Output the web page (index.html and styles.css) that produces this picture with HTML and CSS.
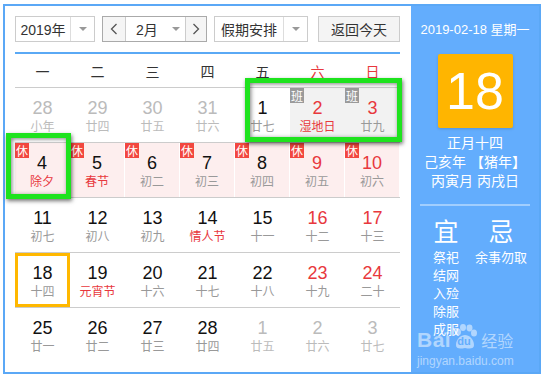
FILE: index.html
```html
<!DOCTYPE html>
<html lang="zh">
<head>
<meta charset="utf-8">
<link rel="stylesheet" href="styles.css">
</head>
<body>
<div class="app">
  <div class="main">
    <div class="toolbar">
      <div class="sel sel-year"><span class="sel-text">2019年</span><span class="sel-arrow"><i class="tri"></i></span></div>
      <div class="month-group">
        <span class="nav"><svg width="8" height="12" viewBox="0 0 8 12"><path d="M6.5 1 L1.5 6 L6.5 11" fill="none" stroke="#555" stroke-width="1.3"/></svg></span>
        <span class="month"><span class="month-text">2月</span><i class="tri"></i></span>
        <span class="nav nav-next"><svg width="8" height="12" viewBox="0 0 8 12"><path d="M1.5 1 L6.5 6 L1.5 11" fill="none" stroke="#555" stroke-width="1.3"/></svg></span>
      </div>
      <div class="sel sel-hol"><span class="sel-text">假期安排</span><span class="sel-arrow"><i class="tri"></i></span></div>
      <div class="btn-today">返回今天</div>
    </div>
    <div class="weekdays">
      <span>一</span><span>二</span><span>三</span><span>四</span><span>五</span><span class="red">六</span><span class="red">日</span>
    </div>
    <div class="grid">
      <div class="row">
        <div class="cell other"><b>28</b><em>小年</em></div>
        <div class="cell other"><b>29</b><em>廿四</em></div>
        <div class="cell other"><b>30</b><em>廿五</em></div>
        <div class="cell other"><b>31</b><em>廿六</em></div>
        <div class="cell"><b>1</b><em>廿七</em></div>
        <div class="cell work"><span class="badge ban">班</span><b class="red">2</b><em class="red">湿地日</em></div>
        <div class="cell work"><span class="badge ban">班</span><b class="red">3</b><em>廿九</em></div>
      </div>
      <div class="row rest-row">
        <div class="cell rest"><span class="badge xiu">休</span><b>4</b><em class="red">除夕</em></div>
        <div class="cell rest"><span class="badge xiu">休</span><b>5</b><em class="red">春节</em></div>
        <div class="cell rest"><span class="badge xiu">休</span><b>6</b><em>初二</em></div>
        <div class="cell rest"><span class="badge xiu">休</span><b>7</b><em>初三</em></div>
        <div class="cell rest"><span class="badge xiu">休</span><b>8</b><em>初四</em></div>
        <div class="cell rest"><span class="badge xiu">休</span><b class="red">9</b><em>初五</em></div>
        <div class="cell rest"><span class="badge xiu">休</span><b class="red">10</b><em>初六</em></div>
      </div>
      <div class="row">
        <div class="cell"><b>11</b><em>初七</em></div>
        <div class="cell"><b>12</b><em>初八</em></div>
        <div class="cell"><b>13</b><em>初九</em></div>
        <div class="cell"><b>14</b><em class="red">情人节</em></div>
        <div class="cell"><b>15</b><em>十一</em></div>
        <div class="cell"><b class="red">16</b><em>十二</em></div>
        <div class="cell"><b class="red">17</b><em>十三</em></div>
      </div>
      <div class="row">
        <div class="cell today"><b>18</b><em>十四</em></div>
        <div class="cell"><b>19</b><em class="red">元宵节</em></div>
        <div class="cell"><b>20</b><em>十六</em></div>
        <div class="cell"><b>21</b><em>十七</em></div>
        <div class="cell"><b>22</b><em>十八</em></div>
        <div class="cell"><b class="red">23</b><em>十九</em></div>
        <div class="cell"><b class="red">24</b><em>二十</em></div>
      </div>
      <div class="row last">
        <div class="cell"><b>25</b><em>廿一</em></div>
        <div class="cell"><b>26</b><em>廿二</em></div>
        <div class="cell"><b>27</b><em>廿三</em></div>
        <div class="cell"><b>28</b><em>廿四</em></div>
        <div class="cell other"><b>1</b><em>廿五</em></div>
        <div class="cell other"><b>2</b><em>廿六</em></div>
        <div class="cell other"><b>3</b><em>廿七</em></div>
      </div>
    </div>
  </div>
  <div class="side">
    <div class="side-date">2019-02-18 星期一</div>
    <div class="big-day">18</div>
    <div class="lunar">
      <div>正月十四</div>
      <div>己亥年 【猪年】</div>
      <div>丙寅月 丙戌日</div>
    </div>
    <div class="divider"></div>
    <div class="yiji">
      <div class="col">
        <div class="yj-title">宜</div>
        <div class="yj-item">祭祀</div>
        <div class="yj-item">结网</div>
        <div class="yj-item">入殓</div>
        <div class="yj-item">除服</div>
        <div class="yj-item">成服</div>
      </div>
      <div class="col">
        <div class="yj-title">忌</div>
        <div class="yj-item">余事勿取</div>
      </div>
    </div>
    <div class="watermark">
      <div class="wm-logo">
        <span class="wm-bai">Bai</span>
        <span class="wm-paw">
          <svg width="26" height="26" viewBox="0 0 26 26">
            <ellipse cx="6" cy="8" rx="3" ry="3.6" fill="rgba(255,255,255,0.5)"/>
            <ellipse cx="11" cy="3.5" rx="3" ry="3.4" fill="rgba(255,255,255,0.5)"/>
            <ellipse cx="17.5" cy="4" rx="3" ry="3.4" fill="rgba(255,255,255,0.5)"/>
            <ellipse cx="22" cy="9" rx="3" ry="3.6" fill="rgba(255,255,255,0.5)"/>
            <path d="M4 21 C4 15 9 11 13 11 C17 11 22 15 22 21 C22 25 18 25 13 24 C8 25 4 25 4 21 Z" fill="rgba(255,255,255,0.5)"/>
          </svg>
          <span class="wm-du">du</span>
        </span>
        <span class="wm-jy">经验</span>
      </div>
      <div class="wm-url">jingyan.baidu.com</div>
    </div>
  </div>
  <div class="mark mark-a"></div>
  <div class="mark mark-b"></div>
</div>
</body>
</html>
```

FILE: styles.css
```css
* { box-sizing: border-box; }
body {
  margin: 0;
  background: #fff;
  font-family: "Liberation Sans", "Noto Sans CJK SC", sans-serif;
  color: #222;
}
.app {
  position: relative;
  margin: 4px 0 0 3px;
  width: 538px;
  height: 370px;
  border: 2px solid #5ba8f6;
  display: flex;
  background: #fff;
}
.main {
  width: 406px;
  padding: 10px 11px 0 10px;
}
.toolbar {
  display: flex;
  height: 26px;
  padding-bottom: 10px;
  border-bottom: 2px solid #5aa9f5;
  box-sizing: content-box;
}
.sel, .month-group, .btn-today {
  height: 26px;
  border: 1px solid #ccc;
  background: #fff;
  display: flex;
  font-size: 14px;
  color: #333;
}
.sel-year { width: 80px; }
.sel-year .sel-text { width: 55px; }
.sel-hol { width: 94px; margin-left: 7px; }
.sel-hol .sel-text { width: 69px; }
.sel-text {
  display: flex;
  align-items: center;
  justify-content: center;
  border-right: 1px solid #ddd;
}
.sel-arrow {
  flex: 1;
  display: flex;
  align-items: center;
  justify-content: center;
}
.tri {
  width: 0;
  height: 0;
  border-left: 4px solid transparent;
  border-right: 4px solid transparent;
  border-top: 4px solid #999;
}
.month-group {
  width: 105px;
  margin-left: 7px;
  border-color: #aaa;
}
.nav {
  width: 23px;
  background: #f5f5f5;
  display: flex;
  align-items: center;
  justify-content: center;
  border-right: 1px solid #ccc;
}
.nav-next { width: 21px; border-right: none; border-left: 1px solid #ccc; }
.month {
  flex: 1;
  display: flex;
  align-items: center;
  padding-left: 10px;
}
.month-text { width: 36px; }
.btn-today {
  width: 82px;
  margin-left: 10px;
  background: #f4f4f4;
  align-items: center;
  justify-content: center;
}
.weekdays {
  display: grid;
  grid-template-columns: repeat(7, 55px);
  height: 34px;
  align-items: center;
  border-bottom: 1px solid #ccc;
  font-size: 14px;
  color: #333;
}
.weekdays span { text-align: center; }
.red { color: #e8383d !important; }
.row {
  display: grid;
  grid-template-columns: repeat(7, 55px);
  height: 55px;
  border-bottom: 1px solid #ccc;
}
.row.last { border-bottom: none; }
.cell {
  position: relative;
  padding-top: 10px;
  text-align: center;
  display: flex;
  flex-direction: column;
  align-items: center;
}
.cell b {
  font-weight: normal;
  font-size: 18px;
  line-height: 20px;
  color: #111;
}
.cell em {
  font-style: normal;
  font-size: 12px;
  line-height: 16px;
  color: #999;
  font-family: "Noto Sans CJK SC", sans-serif;
}
.cell.other b, .cell.other em { color: #bbb; }
.cell.work { background: #f2f2f2; }
.cell.rest { background: #fdeeee; border-right: 1px solid #fff; }
.cell.today { box-shadow: inset 0 0 0 3px #ffb800; }
.badge {
  position: absolute;
  left: 0;
  top: 0;
  width: 14px;
  height: 15px;
  font-size: 12px;
  line-height: 15px;
  text-align: center;
  color: #fff;
  font-family: "Noto Sans CJK SC", sans-serif;
}
.badge.xiu { background: #f2473f; }
.badge.ban { background: #9a9a9a; }
.side {
  flex: 1;
  background: #63adfd;
  color: #fff;
  position: relative;
  display: flex;
  flex-direction: column;
  align-items: center;
  padding-top: 15px;
}
.side-date {
  font-size: 13px;
  line-height: 18px;
}
.big-day {
  margin-top: 15px;
  width: 75px;
  height: 74px;
  background: #ffb500;
  border-radius: 2px;
  font-size: 52px;
  line-height: 74px;
  text-align: center;
  box-shadow: 0 1px 3px rgba(0,0,0,0.15);
}
.lunar {
  margin-top: 6px;
  font-size: 14px;
  line-height: 19px;
  text-align: center;
}
.divider {
  margin-top: 13px;
  width: 110px;
  height: 2px;
  background: rgba(255,255,255,0.4);
}
.yiji {
  display: flex;
  width: 110px;
  margin-top: 11px;
}
.col {
  display: flex;
  flex-direction: column;
  align-items: center;
}
.col:first-child { width: 52px; }
.col:last-child { width: 58px; }
.yj-title {
  font-size: 25px;
  line-height: 30px;
  margin-bottom: 2px;
}
.yj-item {
  font-size: 13px;
  line-height: 18px;
}
.watermark {
  position: absolute;
  left: 6px;
  top: 320px;
  color: rgba(255,255,255,0.5);
}
.wm-logo {
  display: flex;
  align-items: flex-end;
  height: 24px;
}
.wm-bai {
  font-size: 21px;
  font-weight: bold;
  line-height: 20px;
  letter-spacing: 0.5px;
}
.wm-paw {
  position: relative;
  width: 26px;
  height: 26px;
  margin-left: 1px;
}
.wm-paw svg { display: block; }
.wm-du {
  position: absolute;
  left: 5px;
  top: 11px;
  font-size: 11px;
  font-weight: bold;
  color: #63adfd;
  line-height: 12px;
}
.wm-jy {
  font-size: 16px;
  line-height: 20px;
  margin-left: 3px;
  font-family: "Noto Sans CJK SC", sans-serif;
}
.wm-url {
  font-size: 12px;
  margin-top: 4px;
  line-height: 14px;
}
.mark {
  position: absolute;
  border: 5px solid #1ee31e;
  box-shadow: 1px 2px 4px rgba(0,0,0,0.55), inset 1px 1px 4px rgba(0,0,0,0.5);
}
.mark-a { left: 240px; top: 72px; width: 157px; height: 64px; }
.mark-b { left: 1px; top: 127px; width: 65px; height: 66px; }
```
